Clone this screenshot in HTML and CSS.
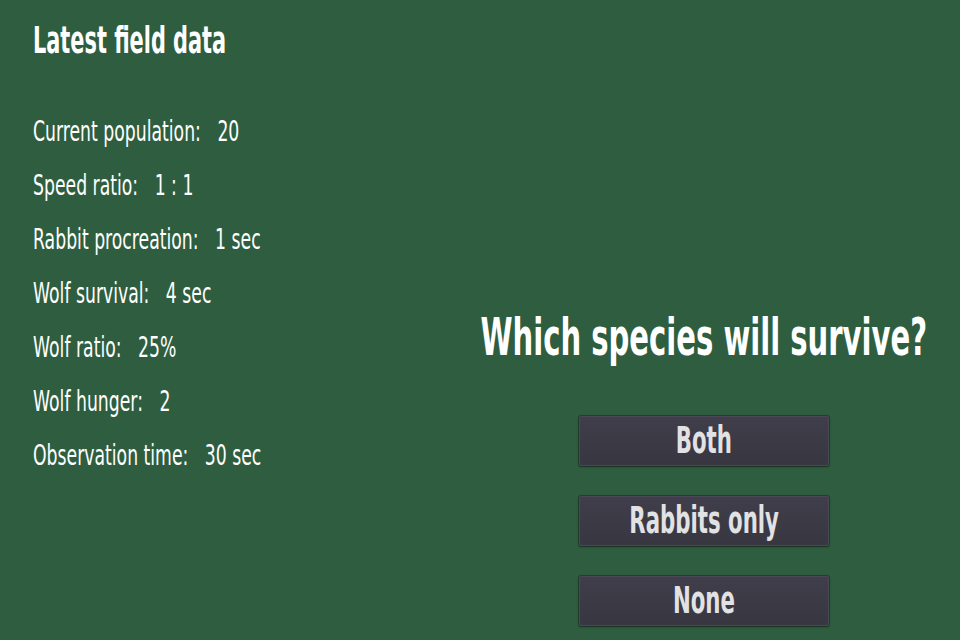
FILE: index.html
```html
<!DOCTYPE html>
<html>
<head>
<meta charset="utf-8">
<link rel="stylesheet" href="styles.css">
</head>
<body>
<div class="page">
  <section class="data">
    <h1 class="title"><span class="narrow">Latest field data</span></h1>
    <ul class="stats">
      <li><span class="narrow">Current population:   20</span></li>
      <li><span class="narrow">Speed ratio:   1 : 1</span></li>
      <li><span class="narrow">Rabbit procreation:   1 sec</span></li>
      <li><span class="narrow">Wolf survival:   4 sec</span></li>
      <li><span class="narrow">Wolf ratio:   25%</span></li>
      <li><span class="narrow">Wolf hunger:   2</span></li>
      <li><span class="narrow">Observation time:   30 sec</span></li>
    </ul>
  </section>
  <section class="quiz">
    <h2 class="question"><span class="narrow center">Which species will survive?</span></h2>
    <div class="choices">
      <button class="choice"><span class="narrow center">Both</span></button>
      <button class="choice"><span class="narrow center">Rabbits only</span></button>
      <button class="choice"><span class="narrow center">None</span></button>
    </div>
  </section>
</div>
</body>
</html>
```
FILE: styles.css
```css
html, body {
  margin: 0;
  padding: 0;
}
body {
  width: 960px;
  height: 640px;
  overflow: hidden;
  background: #2e5e3f;
  color: #ffffff;
  font-family: "DejaVu Sans", sans-serif;
}
.narrow {
  display: inline-block;
  white-space: pre;
  transform-origin: left center;
}
.narrow.center {
  transform-origin: center center;
}
.page {
  display: flex;
  height: 640px;
}
.data {
  flex: none;
  width: 448px;
  box-sizing: border-box;
  padding: 18px 0 0 33px;
}
.title {
  margin: 0;
  font-size: 38px;
  line-height: 44px;
  font-weight: bold;
}
.title .narrow {
  transform: scaleX(0.549);
}
.stats {
  list-style: none;
  margin: 54px 0 0 0;
  padding: 0;
  display: flex;
  flex-direction: column;
  gap: 24px;
}
.stats li {
  font-size: 29px;
  line-height: 30px;
  white-space: nowrap;
}
.stats .narrow {
  transform: scaleX(0.595);
}
.quiz {
  flex: none;
  width: 512px;
  min-width: 0;
  display: flex;
  flex-direction: column;
  align-items: center;
  padding-top: 308px;
}
.question {
  margin: 0;
  font-size: 51px;
  line-height: 60px;
  font-weight: bold;
  white-space: nowrap;
  display: flex;
  justify-content: center;
  width: 100%;
  min-width: 0;
}
.question .narrow {
  transform: scaleX(0.57);
  flex-shrink: 0;
}
.choices {
  margin-top: 48px;
  display: flex;
  flex-direction: column;
  gap: 30px;
}
.choice {
  width: 250px;
  height: 50px;
  box-sizing: border-box;
  border: 1px solid #4a4856;
  border-radius: 2px;
  background: linear-gradient(#403e4a, #383640);
  box-shadow: 0 0 0 1px rgba(20, 30, 25, 0.45), 0 1px 3px rgba(0, 0, 0, 0.3);
  color: #e2e2e4;
  font-family: inherit;
  font-size: 37px;
  font-weight: bold;
  padding: 0;
  display: flex;
  align-items: center;
  justify-content: center;
  overflow: visible;
}
.choice .narrow {
  transform: scaleX(0.575);
  flex-shrink: 0;
  line-height: 44px;
}
```
